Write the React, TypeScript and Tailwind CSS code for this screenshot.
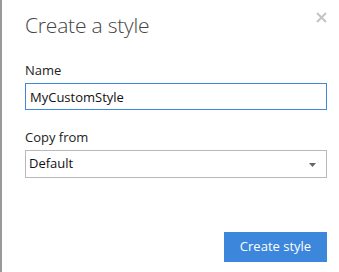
import React, { useState } from "react";

export default function App() {
  const [name, setName] = useState("MyCustomStyle");
  const [copyFrom, setCopyFrom] = useState("Default");

  return (
    <div
      className="w-[339px] h-[272px] bg-white border-l-2 border-[#999] relative"
      style={{ fontFamily: '"Segoe UI", "Open Sans", "Noto Sans", sans-serif' }}
    >
      {/* Close button */}
      <button className="absolute right-[12px] top-[11px] w-[12px] h-[12px] flex items-center justify-center">
        <svg width="11" height="11" viewBox="0 0 11 11">
          <path d="M1 1L10 10M10 1L1 10" stroke="#c4c4c4" strokeWidth="2" />
        </svg>
      </button>

      <div className="pl-[23px] pr-[10px] pt-[11px]">
        <h1 className="text-[21px] font-light text-[#444] leading-[28px] tracking-[-0.2px]">
          Create a style
        </h1>

        <label className="block mt-[22px] text-[13px] text-[#222] leading-[18px]">
          Name
        </label>
        <input
          value={name}
          onChange={(e) => setName(e.target.value)}
          className="mt-[4px] w-[302px] h-[27px] border border-[#3e88dc] px-[4px] text-[13px] text-[#111] outline-none"
        />

        <label className="block mt-[18px] text-[13px] text-[#222] leading-[18px]">
          Copy from
        </label>
        <div className="mt-[4px] w-[302px] h-[28px] border border-[#b9b9b9] relative flex items-center">
          <select
            value={copyFrom}
            onChange={(e) => setCopyFrom(e.target.value)}
            className="appearance-none w-full h-full px-[3px] text-[13px] text-[#111] bg-transparent outline-none"
          >
            <option>Default</option>
          </select>
          <svg
            className="absolute right-[10px] top-[12px] pointer-events-none"
            width="7"
            height="4"
            viewBox="0 0 7 4"
          >
            <path d="M0 0H7L3.5 4Z" fill="#666" />
          </svg>
        </div>

        <div className="flex justify-end w-[302px] mt-[54px]">
          <button className="w-[103px] h-[30px] bg-[#3c87dc] text-white text-[13px]">
            Create style
          </button>
        </div>
      </div>
    </div>
  );
}
